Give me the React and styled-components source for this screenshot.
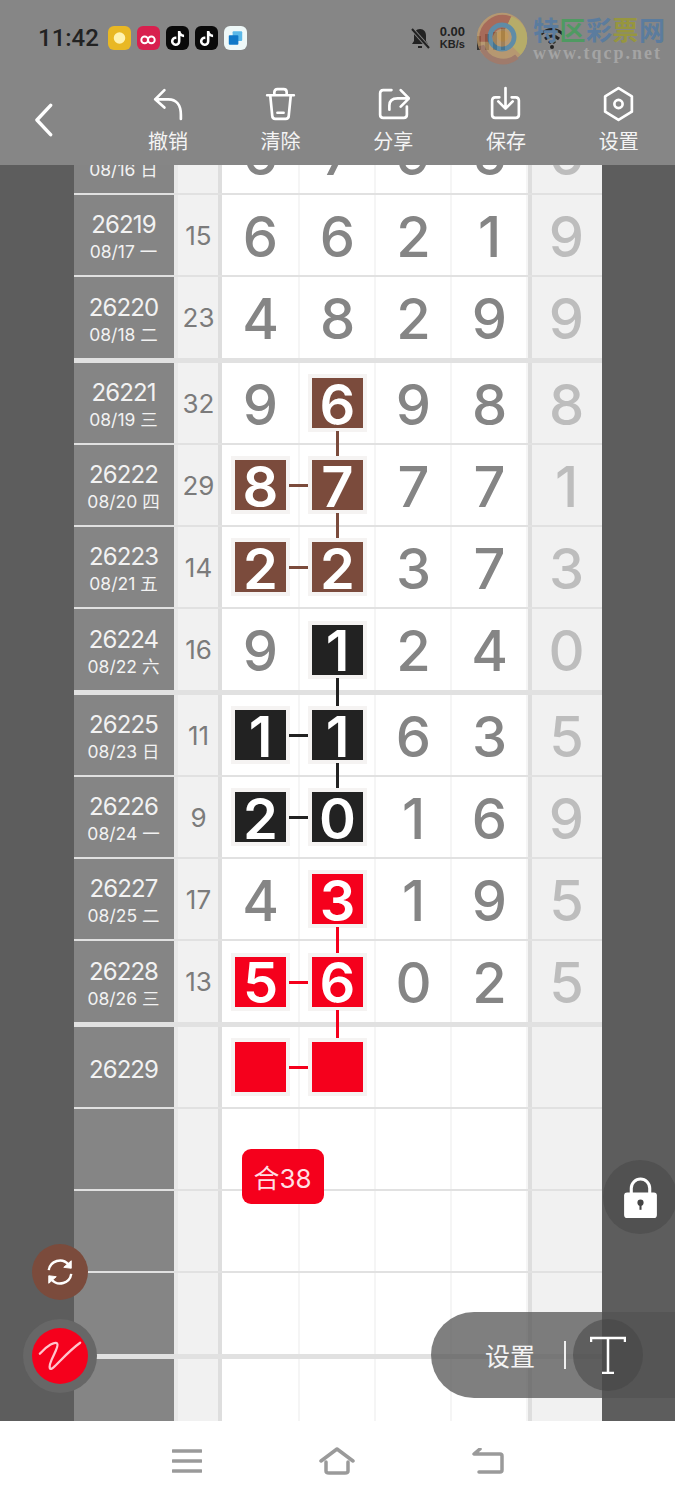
import React from "react";
import styled, { createGlobalStyle, css } from "styled-components";
import { FaTiktok } from "react-icons/fa6";

const BROWN = "#7b4b3c";
const BLACK = "#222222";
const RED = "#f5001c";

const rows = [
    { no: "\u00a0", date: "08/16 日", nums: [6, 7, 9, 5, 6] },
    { no: "26219", date: "08/17 一", sum: 15, nums: [6, 6, 2, 1, 9] },
    { no: "26220", date: "08/18 二", sum: 23, nums: [4, 8, 2, 9, 9], thick: true },
    { no: "26221", date: "08/19 三", sum: 32, nums: [9, 6, 9, 8, 8], marks: [null, { color: BROWN, down: true }] },
    { no: "26222", date: "08/20 四", sum: 29, nums: [8, 7, 7, 7, 1], marks: [{ color: BROWN, right: true }, { color: BROWN, down: true }] },
    { no: "26223", date: "08/21 五", sum: 14, nums: [2, 2, 3, 7, 3], marks: [{ color: BROWN, right: true }, { color: BROWN }] },
    { no: "26224", date: "08/22 六", sum: 16, nums: [9, 1, 2, 4, 0], marks: [null, { color: BLACK, down: true }], thick: true },
    { no: "26225", date: "08/23 日", sum: 11, nums: [1, 1, 6, 3, 5], marks: [{ color: BLACK, right: true }, { color: BLACK, down: true }] },
    { no: "26226", date: "08/24 一", sum: 9, nums: [2, 0, 1, 6, 9], marks: [{ color: BLACK, right: true }, { color: BLACK }] },
    { no: "26227", date: "08/25 二", sum: 17, nums: [4, 3, 1, 9, 5], marks: [null, { color: RED, down: true }] },
    { no: "26228", date: "08/26 三", sum: 13, nums: [5, 6, 0, 2, 5], marks: [{ color: RED, right: true }, { color: RED, down: true }], thick: true },
    { no: "26229", nums: ["", "", "", "", ""], marks: [{ color: RED, right: true }, { color: RED }] },
    { nums: ["", "", "", "", ""] },
    { nums: ["", "", "", "", ""] },
    { nums: ["", "", "", "", ""], thick: true },
    { nums: ["", "", "", "", ""] },
];

const tools = [
    { label: "撤销", icon: <path d="M13 4 L4 13 L13 21 M4 13 H17 C24 13 29 18 29 28 V32" /> },
    { label: "清除", icon: <path d="M3 9 H29 M10 9 V6 Q10 3 13 3 H19 Q22 3 22 6 V9 M6 9 L8 29 Q8 32 11 32 H21 Q24 32 24 29 L26 9 M13 26 H19" /> },
    { label: "分享", icon: <path d="M14 4 H6 Q3 4 3 7 V28 Q3 31 6 31 H26 Q29 31 29 28 V20 M12 23 V19 Q12 12 20 12 H30 M23 4 L31 12 L23 20" /> },
    { label: "保存", icon: <path d="M10 11 H6 Q3 11 3 14 V28 Q3 31 6 31 H26 Q29 31 29 28 V14 Q29 11 26 11 H22 M16 2 V21 M9 15 L16 22 L23 15" /> },
    { label: "设置", icon: <><path d="M16 2 L29 10 V25 L16 33 L3 25 V10 Z" /><circle cx="16" cy="17.5" r="4" /></> },
];

const App = () => {
    return (
        <Page>
            <GlobalStyle />
            <Header>
                <StatusBar>
                    <Clock>11:42</Clock>
                    <AppIcon $bg="#e9b824"><circle cx="12" cy="12" r="6" fill="#fff3b0" /></AppIcon>
                    <AppIcon $bg="#d8204e"><circle cx="8" cy="14" r="3.5" fill="none" stroke="#fff" strokeWidth="2" /><circle cx="15" cy="14" r="3.5" fill="none" stroke="#fff" strokeWidth="2" /></AppIcon>
                    <TikTokBadge><FaTiktok size={15} /></TikTokBadge>
                    <TikTokBadge><FaTiktok size={15} /></TikTokBadge>
                    <AppIcon $bg="#eef8f8"><rect x="9" y="5" width="10" height="10" rx="1" fill="#5ab8e8" /><rect x="5" y="9" width="10" height="10" rx="1" fill="#0f78c8" /></AppIcon>
                    <StatusRight>
                        <StatusGlyph viewBox="0 0 24 24">
                            <path d="M12 3 C8 3 6 6 6 10 V15 L4 18 H20 L18 15 V10 C18 6 16 3 12 3 Z M10 20 H14 V22 H10 Z" fill="#222" />
                            <path d="M4 3 L21 22" stroke="#868686" strokeWidth="4" />
                            <path d="M4 3 L21 22" stroke="#222" strokeWidth="2" />
                        </StatusGlyph>
                        <Speed><b>0.00</b><span>KB/s</span></Speed>
                        <SignalBars viewBox="0 0 34 24">
                            <path d="M2 10 H6 V24 H2 Z M10 8 H14 V24 H10 Z M18 6 H22 V24 H18 Z M26 2 H30 V24 H26 Z" fill="#333" />
                        </SignalBars>
                        <WifiGlyph viewBox="0 0 26 22">
                            <path d="M2 7 Q13 -2 24 7 M6 12 Q13 6 20 12 M10 16 Q13 13 16 16" fill="none" stroke="#222" strokeWidth="3" />
                            <circle cx="13" cy="20" r="2" fill="#222" />
                        </WifiGlyph>
                    </StatusRight>
                </StatusBar>
                <ToolBar>
                    <BackButton viewBox="0 0 20 34"><path d="M17 2 L3 17 L17 32" /></BackButton>
                    <Tools>
                        {tools.map((tool) => (
                            <Tool key={tool.label}>
                                <ToolIcon viewBox="0 0 32 35">{tool.icon}</ToolIcon>
                                <ToolLabel>{tool.label}</ToolLabel>
                            </Tool>
                        ))}
                    </Tools>
                </ToolBar>
                <Watermark>
                    <WatermarkLogo viewBox="0 0 60 60">
                        <circle cx="30" cy="30" r="27" fill="#c9a06a" />
                        <path d="M6 34 A25 25 0 0 1 40 7 L34 20 A12 12 0 0 0 20 34 Z" fill="#b4614a" />
                        <path d="M40 7 A25 25 0 0 1 50 48 L40 38 A12 12 0 0 0 34 20 Z" fill="#c9bb5f" />
                        <circle cx="30" cy="29" r="13" fill="none" stroke="#4f8fb4" strokeWidth="5" />
                        <circle cx="31" cy="28" r="6" fill="#d8a14c" />
                        <path d="M8 38 A24 24 0 0 0 46 50" fill="none" stroke="#a97763" strokeWidth="6" />
                    </WatermarkLogo>
                    <WatermarkText>
                        <WatermarkTitle>特<TitleAccent $color="#4f9a62">区</TitleAccent>彩<TitleAccent $color="#97963f">票</TitleAccent>网</WatermarkTitle>
                        <WatermarkUrl>www.tqcp.net</WatermarkUrl>
                    </WatermarkText>
                </Watermark>
            </Header>

            <Main>
                <Side />
                <TableArea>
                    <Table>
                        {rows.map((row, i) => (
                            <Row key={i} $thick={row.thick}>
                                <Issue>
                                    {row.no && <IssueNo>{row.no}</IssueNo>}
                                    {row.date && <IssueDate>{row.date}</IssueDate>}
                                </Issue>
                                <Sum>{row.sum}</Sum>
                                <Divider />
                                {row.nums.slice(0, 4).map((n, j) => {
                                    const mark = row.marks && row.marks[j];
                                    return (
                                        <Digit key={j}>
                                            {mark ? (
                                                <Ball $color={mark.color} $down={mark.down} $right={mark.right} $long={row.thick}>{n}</Ball>
                                            ) : n}
                                        </Digit>
                                    );
                                })}
                                <Divider />
                                <Extra>{row.nums[4]}</Extra>
                            </Row>
                        ))}
                    </Table>
                    <SumBadge>合38</SumBadge>
                </TableArea>
                <Side />

                <SyncFab>
                    <svg viewBox="0 0 32 32" width="30" height="30" fill="none" stroke="#fff" strokeWidth="2.6">
                        <path d="M4 14 A12 12 0 0 1 25 8" />
                        <path d="M28 18 A12 12 0 0 1 7 24" />
                        <path d="M20 11 L28 12 L28 4 Z M12 21 L4 20 L4 28 Z" fill="#fff" strokeWidth="1" />
                    </svg>
                </SyncFab>
                <PenFab>
                    <svg viewBox="0 0 48 40" width="44" height="37" fill="none" stroke="#ffc4cc" strokeWidth="2.5" strokeLinecap="round">
                        <path d="M2 17 C10 8 19 3 21 6 C24 10 10 27 13 33 C15 37 28 18 46 5" />
                    </svg>
                </PenFab>
                <LockFab>
                    <svg viewBox="0 0 32 40" width="33" height="41">
                        <path d="M7 18 V11 A9 9 0 0 1 25 11 V18" fill="none" stroke="#fff" strokeWidth="3" />
                        <rect x="0" y="15" width="32" height="25" rx="3" fill="#fff" />
                        <circle cx="16" cy="25" r="3" fill="#444" />
                        <rect x="15" y="26" width="2" height="6" fill="#444" />
                    </svg>
                </LockFab>
                <SettingPill>
                    <PillLabel>设置</PillLabel>
                    <PillBar />
                    <TextTool>
                        <svg viewBox="0 0 36 38" width="36" height="38" fill="none" stroke="#fff" strokeWidth="2.5">
                            <path d="M1 6 V2 H35 V6 M18 2 V37 M12 37 H24" />
                        </svg>
                    </TextTool>
                </SettingPill>
            </Main>

            <NavBar>
                <NavIcon viewBox="0 0 30 24"><path d="M1 2 H29 M1 12 H29 M1 22 H29" /></NavIcon>
                <NavIcon viewBox="0 0 36 28"><path d="M2 14 L18 2 L34 14 M7 15 V24 Q7 26 10 26 H26 Q29 26 29 24 V15" /></NavIcon>
                <NavIcon viewBox="0 0 32 26"><path d="M8 1 L2 6 L28 6 Q30 6 30 8 V22 Q30 24 28 24 H7" /></NavIcon>
            </NavBar>
        </Page>
    );
};

const GlobalStyle = createGlobalStyle`
    html, body {
        margin: 0;
        padding: 0;
        background: #ffffff;
    }
    * {
        box-sizing: border-box;
    }
`;

const Page = styled.div`
    width: 675px;
    height: 1500px;
    display: flex;
    flex-direction: column;
    overflow: hidden;
    font-family: "Noto Sans CJK SC", "Noto Sans", sans-serif;
`;

const Header = styled.header`
    position: relative;
    z-index: 1;
    height: 165px;
    flex: none;
    background: #868686;
    padding-top: 22px;
`;

const StatusBar = styled.div`
    height: 32px;
    display: flex;
    align-items: center;
    gap: 6px;
    padding: 0 0 0 38px;
`;

const Clock = styled.span`
    font-family: Roboto, sans-serif;
    font-size: 24px;
    font-weight: 500;
    color: #222222;
    width: 64px;
`;

const IconSvg = ({ className, children }) => (
    <svg className={className} viewBox="0 0 24 24">{children}</svg>
);

const AppIcon = styled(IconSvg)`
    width: 23px;
    height: 24px;
    border-radius: 6px;
    background: ${(p) => p.$bg};
`;

const TikTokBadge = styled.div`
    width: 23px;
    height: 24px;
    border-radius: 6px;
    background: #0a0a0a;
    color: #ffffff;
    display: flex;
    align-items: center;
    justify-content: center;
`;

const StatusRight = styled.div`
    margin-left: auto;
    display: flex;
    align-items: center;
    padding-right: 110px;
`;

const StatusGlyph = styled.svg`
    width: 24px;
    height: 24px;
    margin-right: 8px;
`;

const Speed = styled.div`
    display: flex;
    flex-direction: column;
    align-items: center;
    font-family: "Liberation Sans", sans-serif;
    color: #222222;
    line-height: 13px;
    font-size: 11px;
    font-weight: 700;
    b {
        font-size: 13px;
    }
`;

const SignalBars = styled.svg`
    width: 34px;
    height: 24px;
    margin: 0 30px 0 10px;
`;

const WifiGlyph = styled.svg`
    width: 26px;
    height: 22px;
`;

const ToolBar = styled.div`
    display: flex;
    align-items: flex-start;
    padding: 32px 0 0 34px;
`;

const BackButton = styled.svg`
    width: 20px;
    height: 34px;
    margin-top: 17px;
    fill: none;
    stroke: #ffffff;
    stroke-width: 3.5;
    stroke-linecap: round;
    stroke-linejoin: round;
`;

const Tools = styled.div`
    display: flex;
    margin-left: 58px;
`;

const Tool = styled.div`
    width: 112.7px;
    display: flex;
    flex-direction: column;
    align-items: center;
    gap: 5px;
`;

const ToolIcon = styled.svg`
    width: 33px;
    height: 36px;
    fill: none;
    stroke: #ffffff;
    stroke-width: 2.6;
    stroke-linecap: round;
    stroke-linejoin: round;
`;

const ToolLabel = styled.span`
    font-size: 20px;
    line-height: 28px;
    color: #f4f4f4;
`;

const Watermark = styled.div`
    position: absolute;
    left: 474px;
    top: 10px;
    display: flex;
    align-items: center;
`;

const WatermarkLogo = styled.svg`
    width: 56px;
    height: 56px;
    opacity: 0.72;
`;

const WatermarkText = styled.div`
    display: flex;
    flex-direction: column;
    margin-left: 3px;
`;

const WatermarkTitle = styled.span`
    font-size: 26px;
    line-height: 30px;
    font-weight: 700;
    color: #5b7c9e;
    letter-spacing: 0.5px;
`;

const TitleAccent = styled.span`
    color: ${(p) => p.$color};
`;

const WatermarkUrl = styled.span`
    font-family: "Liberation Serif", serif;
    font-size: 18px;
    line-height: 18px;
    font-weight: 700;
    color: #a4a4a4;
    letter-spacing: 2px;
`;

const Main = styled.main`
    position: relative;
    flex: 1;
    min-height: 0;
    display: flex;
`;

const Side = styled.div`
    flex: 1;
    background: #5d5d5d;
`;

const TableArea = styled.div`
    position: relative;
    width: 528px;
    flex: none;
    overflow: hidden;
    background: #ffffff;
`;

const Table = styled.div`
    margin-top: -52px;
`;

const Row = styled.div`
    display: grid;
    grid-template-columns: 100px 44px 4px 78px 76px 76px 76px 4px 70px;
    height: ${(p) => (p.$thick ? 86 : 82)}px;
    border-bottom: ${(p) => (p.$thick ? 5 : 2)}px solid #e1e1e1;
`;

const Issue = styled.div`
    background: #858585;
    color: #f2f2f2;
    display: flex;
    flex-direction: column;
    align-items: center;
    justify-content: center;
    gap: 1px;
    padding-top: 4px;
`;

const IssueNo = styled.div`
    font-family: Inter, sans-serif;
    font-size: 24px;
    line-height: 29px;
    letter-spacing: -0.9px;
`;

const IssueDate = styled.div`
    font-family: Inter, "Noto Sans CJK SC", sans-serif;
    font-size: 17.5px;
    line-height: 24px;
`;

const Sum = styled.div`
    background: #f1f1f1;
    border-left: 4px solid #e9e9e9;
    color: #7b7b7b;
    font-family: Inter, sans-serif;
    font-size: 26px;
    padding-left: 2px;
    display: flex;
    align-items: center;
    justify-content: center;
`;

const Divider = styled.div`
    background: #dedede;
`;

const Digit = styled.div`
    display: flex;
    align-items: center;
    justify-content: center;
    color: #858585;
    font-family: Inter, sans-serif;
    font-size: 56px;
    font-weight: 500;
    padding-top: 3px;
    box-shadow: inset -2px 0 0 #f5f5f5;
`;

const Extra = styled(Digit)`
    background: #f1f1f1;
    color: #bdbdbd;
    box-shadow: none;
`;

const Ball = styled.div`
    position: relative;
    width: 51px;
    height: 50px;
    margin-top: -3px;
    display: flex;
    align-items: center;
    justify-content: center;
    padding-top: 3px;
    font-weight: 600;
    background: ${(p) => p.$color};
    color: #ffffff;
    box-shadow: 0 0 0 4px #f5f3f2;
    ${(p) => p.$down && css`
        &::after {
            content: "";
            position: absolute;
            left: 24px;
            top: 53px;
            width: 3px;
            height: ${p.$long ? 31 : 27}px;
            background: ${p.$color};
        }
    `}
    ${(p) => p.$right && css`
        &::before {
            content: "";
            position: absolute;
            left: 54px;
            top: 24px;
            width: 20px;
            height: 3px;
            background: ${p.$color};
        }
    `}
`;

const SumBadge = styled.div`
    position: absolute;
    left: 168px;
    top: 984px;
    width: 82px;
    height: 55px;
    border-radius: 9px;
    background: ${RED};
    color: #ffdfe2;
    font-family: Inter, "Noto Sans CJK SC", sans-serif;
    font-size: 26px;
    display: flex;
    align-items: center;
    justify-content: center;
`;

const Fab = styled.div`
    position: absolute;
    left: 32px;
    width: 56px;
    height: 56px;
    border-radius: 50%;
    display: flex;
    align-items: center;
    justify-content: center;
`;

const SyncFab = styled(Fab)`
    top: 1079px;
    background: ${BROWN};
`;

const PenFab = styled(Fab)`
    top: 1163px;
    background: ${RED};
    box-shadow: 0 0 0 9px #676767;
`;

const LockFab = styled(Fab)`
    left: 603px;
    top: 995px;
    width: 74px;
    height: 74px;
    background: #515151;
`;

const SettingPill = styled.div`
    position: absolute;
    left: 431px;
    top: 1147px;
    width: 250px;
    height: 86px;
    border-radius: 43px 0 0 43px;
    background: rgba(82, 82, 82, 0.74);
    display: flex;
    align-items: center;
    padding-left: 54px;
`;

const PillLabel = styled.span`
    font-size: 25px;
    color: #f4f4f4;
`;

const PillBar = styled.div`
    width: 2px;
    height: 28px;
    margin-left: 29px;
    background: #f0f0f0;
`;

const TextTool = styled.div`
    width: 70px;
    height: 72px;
    margin-left: 7px;
    border-radius: 50%;
    background: rgba(70, 70, 70, 0.55);
    display: flex;
    align-items: center;
    justify-content: center;
`;

const NavBar = styled.nav`
    height: 79px;
    flex: none;
    background: #ffffff;
    display: grid;
    grid-template-columns: 30px 36px 32px;
    justify-content: start;
    align-items: center;
    column-gap: 117px;
    padding: 0 0 0 172px;
`;

const NavIcon = styled.svg`
    width: 100%;
    fill: none;
    stroke: #9a9a9a;
    stroke-width: 3.5;
    stroke-linecap: round;
    stroke-linejoin: round;
`;

export default App;
